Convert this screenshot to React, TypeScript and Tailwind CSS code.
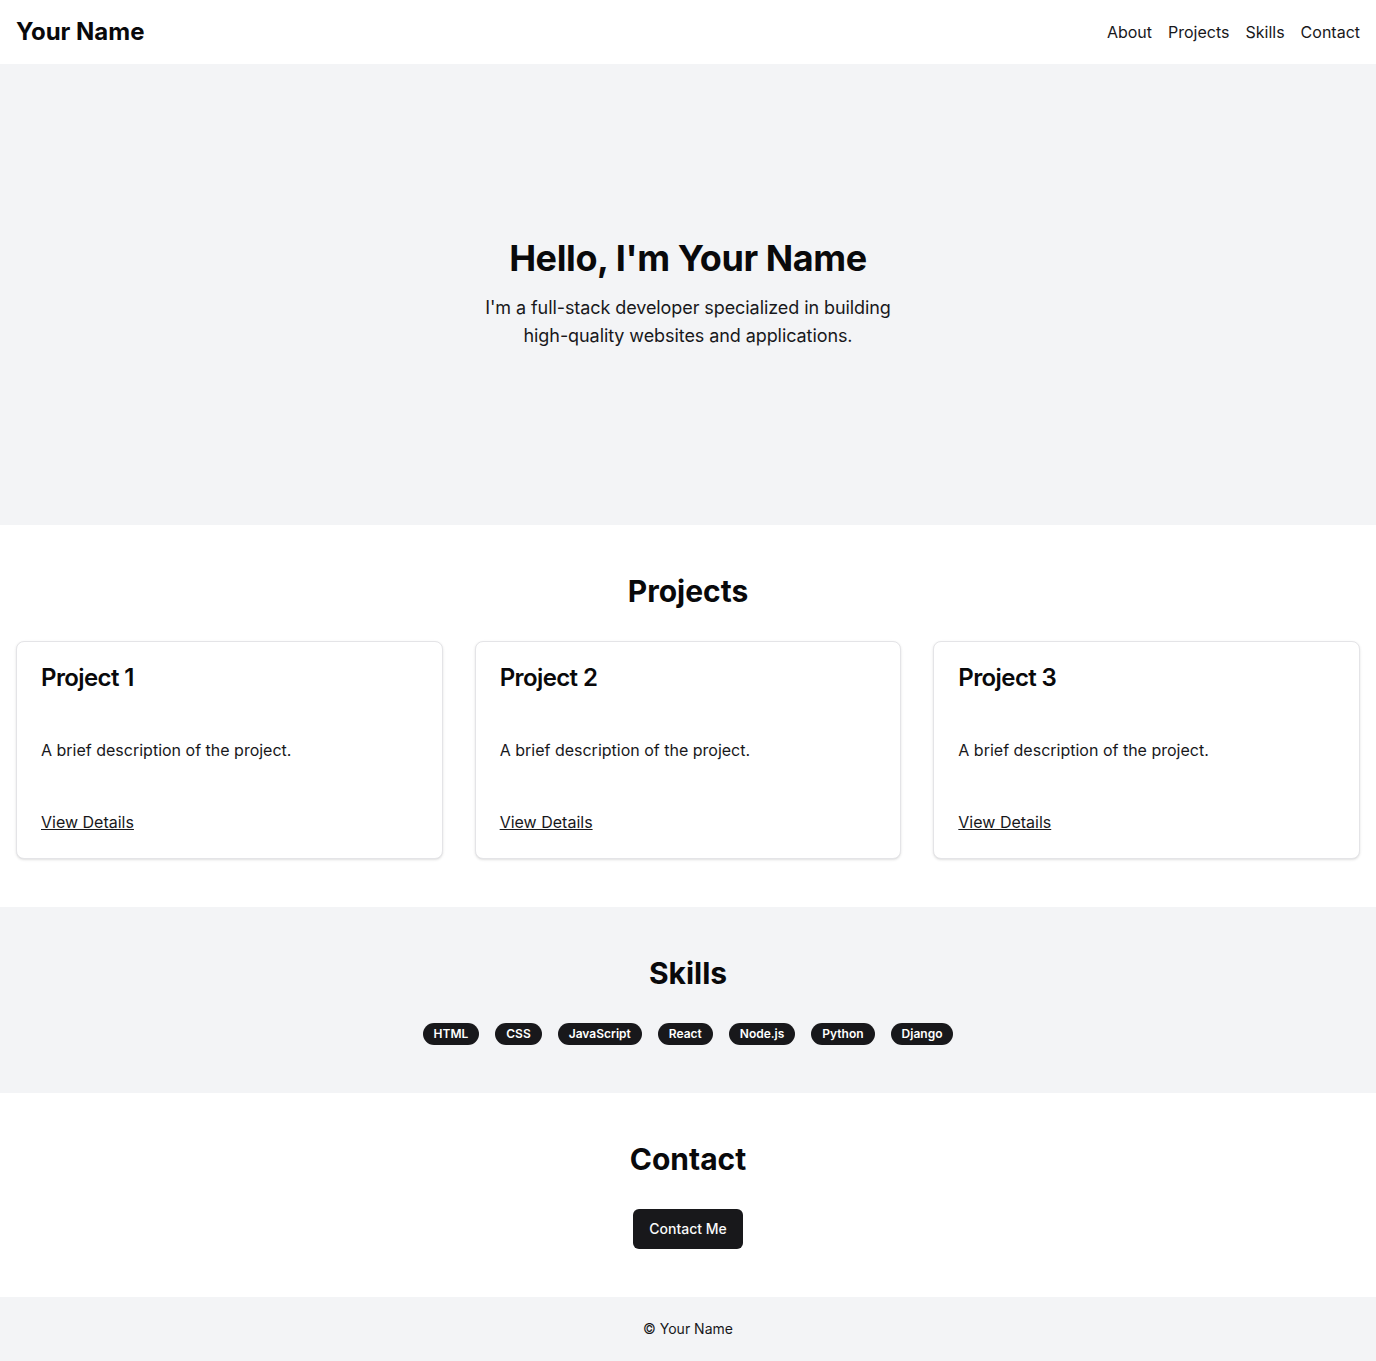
import { FC } from 'react';

const projects = [
  { title: 'Project 1', description: 'A brief description of the project.' },
  { title: 'Project 2', description: 'A brief description of the project.' },
  { title: 'Project 3', description: 'A brief description of the project.' },
];

const skills = ['HTML', 'CSS', 'JavaScript', 'React', 'Node.js', 'Python', 'Django'];

const App: FC = () => {
  return (
    <div className="min-h-screen bg-white text-[#09090b] font-['Inter',sans-serif]">
      <header className="flex h-16 items-center justify-between px-4">
        <a href="#" className="text-2xl font-bold">Your Name</a>
        <nav className="flex items-center gap-4 text-base text-[#18181b]">
          <a href="#about">About</a>
          <a href="#projects">Projects</a>
          <a href="#skills">Skills</a>
          <a href="#contact">Contact</a>
        </nav>
      </header>

      {/* hero */}
      <section className="flex h-[461px] flex-col items-center justify-center bg-[#f3f4f6] px-4 pb-px text-center">
        <h1 className="text-4xl font-bold tracking-[-0.4px]">Hello, I'm Your Name</h1>
        <p className="mx-auto mt-4 max-w-md text-lg tracking-[-0.08px] text-[#18181b]">
          I'm a full-stack developer specialized in building high-quality websites and applications.
        </p>
      </section>

      <section id="projects" className="px-4 py-12">
        <h2 className="mb-8 text-center text-3xl font-bold">Projects</h2>
        <div className="grid grid-cols-3 gap-8">
          {projects.map((project) => (
            <div key={project.title} className="rounded-lg border border-[#e4e4e7] bg-white shadow-sm">
              <div className="p-6">
                <h3 className="text-2xl font-semibold leading-none tracking-tight">{project.title}</h3>
              </div>
              <div className="p-6">
                <p className="text-base text-[#18181b]">{project.description}</p>
              </div>
              <div className="p-6">
                <a href="#" className="text-base text-[#18181b] underline">View Details</a>
              </div>
            </div>
          ))}
        </div>
      </section>

      <section id="skills" className="bg-[#f3f4f6] px-4 py-12">
        <h2 className="mb-8 text-center text-3xl font-bold">Skills</h2>
        <div className="flex flex-wrap justify-center gap-4">
          {skills.map((skill) => (
            <span
              key={skill}
              className="rounded-full border border-transparent bg-[#18181b] px-2.5 py-0.5 text-xs font-semibold text-white"
            >
              {skill}
            </span>
          ))}
        </div>
      </section>

      <section id="contact" className="px-4 py-12 text-center">
        <h2 className="mb-8 text-3xl font-bold">Contact</h2>
        <button className="h-10 rounded-md bg-[#18181b] px-4 py-2 text-sm font-medium text-[#fafafa]">
          Contact Me
        </button>
      </section>

      <footer className="flex h-16 items-center justify-center bg-[#f3f4f6] text-sm text-[#18181b]">
        © Your Name
      </footer>
    </div>
  );
};

export default App;
